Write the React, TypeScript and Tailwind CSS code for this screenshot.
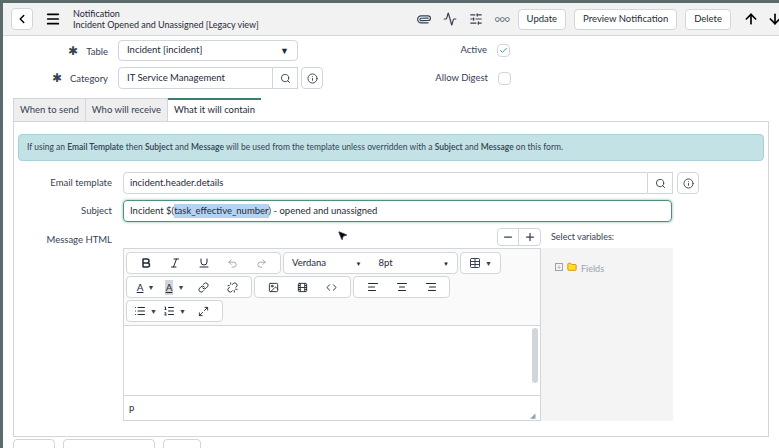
import React from 'react';
import { ChevronLeft, Menu, Paperclip, Activity, SlidersHorizontal, ArrowUp, ArrowDown, Search, Info, Check, Bold, Italic, Underline, Undo2, Redo2, Link, Unlink, Image, Film, Code, AlignLeft, AlignCenter, AlignRight, List, ListOrdered, Maximize2, Table, Minus, Plus, Folder, MousePointer2 } from 'lucide-react';

const font = { fontFamily: 'Lato, "Open Sans", sans-serif' };

function Caret() {
  return <span className="ml-1 text-[7px] text-gray-700">▼</span>;
}

function Group({ children, className = '' }: { children: React.ReactNode; className?: string }) {
  return <div className={`flex items-center h-[22px] border border-gray-300 rounded-sm bg-white px-1 gap-0 ${className}`}>{children}</div>;
}

function Tb({ children }: { children: React.ReactNode }) {
  return <div className="w-[29px] flex items-center justify-center text-gray-800">{children}</div>;
}

export default function App() {
  return (
    <div className="w-[779px] h-[448px] overflow-hidden bg-[#5b6b6b] pt-[3px] pl-[3px]" style={font}>
      <div className="bg-white h-full flex flex-col">
        {/* header */}
        <div className="h-[33px] shrink-0 bg-[#f2f2f2] border-b border-gray-300 flex items-center px-[8px] gap-2">
          <button className="w-[22px] h-[22px] border border-gray-300 bg-white rounded-sm flex items-center justify-center"><ChevronLeft size={14} strokeWidth={2.5} /></button>
          <Menu size={16} strokeWidth={2.5} className="ml-1" />
          <div className="leading-[11px] ml-1">
            <div className="text-[9px] text-gray-800">Notification</div>
            <div className="text-[9px] text-gray-800">Incident Opened and Unassigned [Legacy view]</div>
          </div>
          <div className="flex-1" />
          <Paperclip size={14} className="text-gray-700 rotate-45" />
          <Activity size={14} className="text-gray-700 ml-1" />
          <SlidersHorizontal size={14} className="text-gray-700 ml-1" />
          <span className="text-[8px] text-gray-700 tracking-tighter ml-1">○○○</span>
          <button className="h-[21px] px-2 border border-gray-300 bg-white rounded-sm text-[9.5px] text-gray-800">Update</button>
          <button className="h-[21px] px-2 border border-gray-300 bg-white rounded-sm text-[9.5px] text-gray-800">Preview Notification</button>
          <button className="h-[21px] px-2 border border-gray-300 bg-white rounded-sm text-[9.5px] text-gray-800">Delete</button>
          <ArrowUp size={16} strokeWidth={2.5} className="ml-1" />
          <ArrowDown size={16} strokeWidth={2.5} className="-mr-3" />
        </div>

        <div className="flex-1 px-[10px] text-[9.5px] text-gray-700">
          {/* table row */}
          <div className="flex items-center h-[21px] mt-[4px]">
            <div className="w-[105px] text-right pr-[10px]"><span className="text-[12px] mr-2">✱</span>Table</div>
            <div className="w-[180px] h-[21px] border border-gray-300 rounded-sm flex items-center px-2 justify-between text-gray-800">Incident [incident]<span className="text-[9px]">▼</span></div>
            <div className="w-[199px] text-right pr-[10px]">Active</div>
            <div className="w-[13px] h-[13px] border border-gray-300 rounded-sm flex items-center justify-center"><Check size={9} className="text-teal-700" /></div>
          </div>
          {/* category */}
          <div className="flex items-center h-[22px] mt-[6px]">
            <div className="w-[105px] text-right pr-[10px]"><span className="text-[12px] mr-2">✱</span>Category</div>
            <div className="w-[155px] h-[22px] border border-gray-300 rounded-l-sm flex items-center px-2 text-gray-800">IT Service Management</div>
            <div className="w-[25px] h-[22px] border border-l-0 border-gray-300 flex items-center justify-center"><Search size={11} /></div>
            <div className="w-[22px] h-[22px] border border-gray-300 rounded-sm ml-[3px] flex items-center justify-center"><Info size={11} /></div>
            <div className="w-[175px] text-right pr-[10px]">Allow Digest</div>
            <div className="w-[13px] h-[13px] border border-gray-300 rounded-sm" />
          </div>
          {/* tabs */}
          <div className="flex mt-[9px] h-[23px]">
            <div className="px-[6px] flex items-center bg-[#eeeeee] border border-gray-300 border-b-0">When to send</div>
            <div className="px-[6px] flex items-center bg-[#eeeeee] border-t border-r border-gray-300">Who will receive</div>
            <div className="px-[6px] flex items-center bg-white border-t-2 border-t-[#3d7d70] text-gray-800">What it will contain</div>
          </div>
          <div className="border border-gray-300 h-[316px] px-[4px] pt-[12px] relative">
            <div className="h-[27px] bg-[#c3e2e6] border border-[#a9d0d6] rounded-sm flex items-center px-2 text-[8.5px] text-gray-700">
              <span>If using an <b className="font-semibold">Email Template</b> then <b className="font-semibold">Subject</b> and <b className="font-semibold">Message</b> will be used from the template unless overridden with a <b className="font-semibold">Subject</b> and <b className="font-semibold">Message</b> on this form.</span>
            </div>
            <div className="flex items-center mt-[11px] h-[22px]">
              <div className="w-[105px] text-right pr-[11px]">Email template</div>
              <div className="w-[525px] h-[22px] border border-gray-300 rounded-l-sm flex items-center px-[6px] text-gray-800">incident.header.details</div>
              <div className="w-[25px] h-[22px] border border-l-0 border-gray-300 flex items-center justify-center"><Search size={11} /></div>
              <div className="w-[22px] h-[22px] border border-gray-300 rounded-sm ml-[4px] flex items-center justify-center"><Info size={11} /></div>
            </div>
            <div className="flex items-center mt-[6px] h-[22px]">
              <div className="w-[105px] text-right pr-[11px]">Subject</div>
              <div className="w-[549px] h-[22px] border border-[#4f8e7f] rounded-sm shadow-[0_0_3px_#7fb8a8] flex items-center px-[6px] text-gray-800">
                Incident $(<span className="bg-[#b6d2f2]">task_effective_number</span>) - opened and unassigned
              </div>
            </div>
            <div className="flex mt-[6px]">
              <div className="w-[105px] text-right pr-[11px] pt-[5px]">Message HTML</div>
              <div className="w-[418px] flex flex-col">
                <div className="flex justify-end">
                  <div className="flex h-[18px] border border-gray-300 rounded-sm">
                    <div className="w-[21px] flex items-center justify-center border-r border-gray-300"><Minus size={12} strokeWidth={2.5} /></div>
                    <div className="w-[21px] flex items-center justify-center"><Plus size={12} strokeWidth={2.5} /></div>
                  </div>
                </div>
                <div className="mt-[2px] border border-gray-300 h-[173px] flex flex-col">
                  <div className="bg-[#fafafa] px-[2px] pt-[3px] pb-[2px] flex flex-col gap-[2px] border-b border-gray-300">
                    <div className="flex gap-[2px]">
                      <Group>
                        <Tb><Bold size={12} strokeWidth={3} /></Tb><Tb><Italic size={12} /></Tb><Tb><Underline size={12} /></Tb>
                        <Tb><Undo2 size={11} className="text-gray-400" /></Tb><Tb><Redo2 size={11} className="text-gray-400" /></Tb>
                      </Group>
                      <Group className="w-[175px] text-[9.5px] px-2 text-gray-800">
                        <span className="w-[76px] flex justify-between items-center">Verdana<span className="text-[6px]">▼</span></span>
                        <span className="ml-[17px] w-[77px] flex justify-between items-center">8pt<span className="text-[6px]">▼</span></span>
                      </Group>
                      <Group className="px-2"><Table size={12} /><Caret /></Group>
                    </div>
                    <div className="flex gap-[2px]">
                      <Group>
                        <Tb><span className="underline text-[10px]">A</span><Caret /></Tb>
                        <Tb><span className="underline text-[10px] bg-gray-300 px-[1px]">A</span><Caret /></Tb>
                        <Tb><Link size={11} /></Tb><Tb><Unlink size={11} /></Tb>
                      </Group>
                      <Group>
                        <Tb><Image size={11} /></Tb><Tb><Film size={11} /></Tb><Tb><Code size={11} /></Tb>
                      </Group>
                      <Group>
                        <Tb><AlignLeft size={12} /></Tb><Tb><AlignCenter size={12} /></Tb><Tb><AlignRight size={12} /></Tb>
                      </Group>
                    </div>
                    <div className="flex gap-[2px] mb-[1px]">
                      <Group>
                        <Tb><List size={12} /><Caret /></Tb><Tb><ListOrdered size={12} /><Caret /></Tb><Tb><Maximize2 size={11} /></Tb>
                      </Group>
                    </div>
                  </div>
                  <div className="flex-1 flex justify-end pr-[2px] pt-[2px]">
                    <div className="w-[6px] h-[55px] rounded bg-gray-300" />
                  </div>
                  <div className="h-[25px] border-t border-gray-300 flex items-center justify-between px-[5px] text-gray-800">
                    <span>p</span><span className="text-[7px] text-gray-400 self-end">◢</span>
                  </div>
                </div>
              </div>
              <div className="flex flex-col">
                <div className="h-[18px] flex items-center pl-[10px] text-[9px] text-gray-700">Select variables:</div>
                <div className="mt-[2px] w-[132px] h-[173px] bg-[#f4f4f4] pl-[14px] pt-[14px] flex items-start gap-1 text-[9px] text-gray-400">
                  <span className="w-[8px] h-[8px] border border-gray-400 text-[7px] leading-[6px] text-center mt-[1px]">+</span>
                  <Folder size={10} className="text-yellow-600 fill-yellow-300" />Fields
                </div>
              </div>
            </div>
            <MousePointer2 size={11} className="absolute left-[323px] top-[108px] fill-black" />
          </div>
          <div className="flex gap-[8px] mt-[2px]">
            <div className="h-[20px] w-[42px] border border-gray-300 rounded-sm" />
            <div className="h-[20px] w-[92px] border border-gray-300 rounded-sm" />
            <div className="h-[20px] w-[38px] border border-gray-300 rounded-sm" />
          </div>
        </div>
      </div>
    </div>
  );
}
